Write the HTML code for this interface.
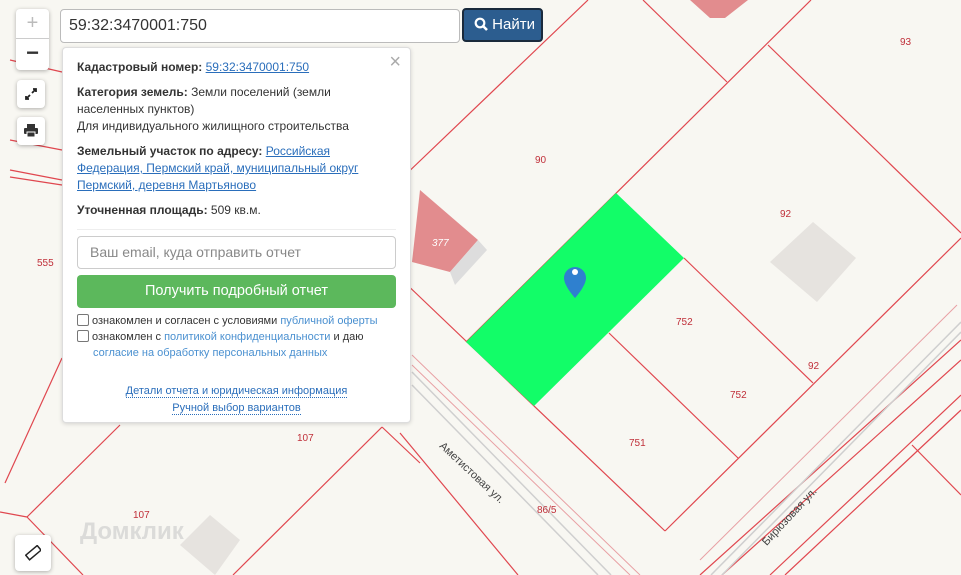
<!DOCTYPE html>
<html><head><meta charset="utf-8"><style>
*{box-sizing:border-box}
body{margin:0;width:961px;height:575px;overflow:hidden;background:#f8f7f2;font-family:"Liberation Sans",sans-serif;position:relative}
svg.map{position:absolute;left:0;top:0}
.ctl{position:absolute;background:#fff;border-radius:4px;box-shadow:0 1px 4px rgba(0,0,0,.3)}
.search{position:absolute;left:60px;top:9px;width:400px;height:34px;background:#fff;border:1px solid #bbb;border-radius:4px;font-size:16px;color:#333;padding:7px 8px}
.btn{position:absolute;left:462px;top:8px;width:81px;height:34px;background:#2c5d8f;border:2px solid #1a2a3c;border-radius:4px;color:#fff;font-size:15px;padding:6px 0 0 10px}
.panel{position:absolute;left:62px;top:47px;width:349px;height:376px;background:#fff;border:1px solid #ddd;border-radius:4px;box-shadow:0 1px 4px rgba(0,0,0,.15);font-size:12px;color:#333;padding:11px 14px 10px 14px}
.panel p{margin:0 0 8px;line-height:17px}
.panel a{color:#2a6ebb;text-decoration:underline}
.panel b{color:#333}
.inp{height:33px;border:1px solid #ccc;border-radius:4px;margin-top:6px;font-size:14px;color:#888;padding:7px 12px}
.green{height:33px;background:#5cb85c;border-radius:4px;margin-top:6px;color:#fff;font-size:14.5px;text-align:center;line-height:33px}
.cb{display:inline-block;width:12px;height:12px;border:1px solid #777;border-radius:2px;vertical-align:-2px;margin-right:3px}
.lk{color:#4a90d0}
.dot{color:#2a6ebb;border-bottom:1px dotted #2a6ebb}
.num{position:absolute;font-size:10px;color:#c0303a}
</style></head><body>
<svg class="map" width="961" height="575" viewBox="0 0 961 575">
<g fill="none" stroke="#e0474f" stroke-width="1.2">
<line x1="588" y1="0" x2="400" y2="180"/>
<line x1="811" y1="0" x2="466" y2="342"/>
<line x1="643" y1="0" x2="727" y2="82"/>
<line x1="768" y1="45" x2="961" y2="233"/>
<line x1="684" y1="258" x2="813" y2="383"/>
<line x1="961" y1="238" x2="665" y2="531"/>
<line x1="609" y1="333" x2="738" y2="458"/>
<line x1="400" y1="278" x2="665" y2="531"/>
<line x1="400" y1="433" x2="518" y2="575"/>
<line x1="382" y1="427" x2="233" y2="575"/>
<line x1="382" y1="427" x2="420" y2="463"/>
<line x1="120" y1="425" x2="27" y2="517"/>
<line x1="27" y1="517" x2="83" y2="575"/>
<line x1="62" y1="358" x2="5" y2="483"/>
<line x1="0" y1="512" x2="27" y2="517"/>
<line x1="912" y1="445" x2="961" y2="495"/>
<line x1="10" y1="60" x2="62" y2="72"/>
<line x1="10" y1="140" x2="62" y2="150"/>
<line x1="10" y1="170" x2="62" y2="180"/>
<line x1="10" y1="177" x2="62" y2="185"/>
<line x1="961" y1="340" x2="700" y2="575"/>
<line x1="961" y1="360" x2="722" y2="575"/>
<line x1="961" y1="395" x2="770" y2="575"/>
<line x1="961" y1="410" x2="785" y2="575"/>
</g>
<g fill="none" stroke="#e8a0a4" stroke-width="1">
<line x1="412" y1="355" x2="640" y2="575"/>
<line x1="412" y1="365" x2="630" y2="575"/>
<line x1="957" y1="305" x2="700" y2="560"/>
</g>
<g fill="none" stroke="#cfcfcf" stroke-width="1.5">
<line x1="412" y1="372" x2="611" y2="575"/>
<line x1="412" y1="385" x2="598" y2="575"/>
<line x1="961" y1="322" x2="711" y2="575"/>
<line x1="961" y1="332" x2="722" y2="575"/>
</g>
<polygon points="616,193 684,258 534,406 466,342" fill="#12fd68"/>
<polygon points="420,190 478,240 450,272 412,262" fill="#e28c8e"/>
<polygon points="478,240 487,250 455,285 450,272" fill="#ddd"/>
<polygon points="690,0 748,0 725,18 710,18" fill="#e28c8e"/>
<polygon points="813,222 856,258 817,302 770,262" fill="#e6e3df"/>
<polygon points="210,515 240,540 215,575 180,545" fill="#e6e3df"/>
<path d="M575,267 a11,11 0 0 1 11,11 c0,8 -11,20 -11,20 c0,0 -11,-12 -11,-20 a11,11 0 0 1 11,-11z" fill="#2f80cf"/>
<circle cx="575" cy="272" r="3" fill="#fff"/>
</svg>
<div class="num" style="left:535px;top:155px">90</div>
<div class="num" style="left:780px;top:209px">92</div>
<div class="num" style="left:900px;top:37px">93</div>
<div class="num" style="left:676px;top:317px">752</div>
<div class="num" style="left:730px;top:390px">752</div>
<div class="num" style="left:808px;top:361px">92</div>
<div class="num" style="left:629px;top:438px">751</div>
<div class="num" style="left:37px;top:258px">555</div>
<div class="num" style="left:297px;top:433px">107</div>
<div class="num" style="left:133px;top:510px">107</div>
<div class="num" style="left:537px;top:505px">86/5</div>
<div class="num" style="left:432px;top:238px;color:#fff;font-style:italic">377</div>
<div style="position:absolute;left:445px;top:440px;font-size:11px;color:#444;transform:rotate(43deg);transform-origin:0 0">Аметистовая ул.</div>
<div style="position:absolute;left:760px;top:540px;font-size:11px;color:#444;transform:rotate(-47deg);transform-origin:0 0">Бирюзовая ул.</div>
<div style="position:absolute;left:80px;top:518px;font-size:24px;color:rgba(200,200,200,.6);font-weight:bold">Домклик</div>

<div class="ctl" style="left:16px;top:9px;width:33px;height:61px">
<div style="height:30px;border-bottom:1px solid #ccc;text-align:center;font-size:20px;color:#bbb;line-height:28px">+</div>
<div style="text-align:center;font-size:22px;color:#333;line-height:28px;font-weight:bold">−</div></div>
<div class="ctl" style="left:17px;top:80px;width:28px;height:28px;text-align:center;padding-top:7px"><svg width="14" height="14"><path d="M8 6 L12 2 M9 2h3v3 M6 8 L2 12 M2 9v3h3" stroke="#222" stroke-width="1.8" fill="none"/></svg></div>
<div class="ctl" style="left:17px;top:117px;width:28px;height:28px;text-align:center;padding-top:7px"><svg width="14" height="13"><rect x="3" y="0" width="8" height="4" fill="#333"/><rect x="0" y="4" width="14" height="6" rx="1" fill="#333"/><rect x="3" y="8" width="8" height="5" fill="#333" stroke="#fff"/></svg></div>
<div class="ctl" style="left:15px;top:535px;width:36px;height:36px;text-align:center;padding-top:10px"><svg width="16" height="16"><rect x="1" y="5" width="15" height="6" transform="rotate(-40 8 8)" fill="none" stroke="#222" stroke-width="1.5"/></svg></div>

<div class="search">59:32:3470001:750</div>
<div class="btn"><svg width="14" height="14" style="vertical-align:-2px"><circle cx="6" cy="6" r="4.3" stroke="#fff" stroke-width="2.2" fill="none"/><line x1="9" y1="9" x2="13" y2="13" stroke="#fff" stroke-width="2.6"/></svg> Найти</div>

<div class="panel">
<div style="position:absolute;right:9px;top:3px;font-size:20px;color:#aaa">×</div>
<p><b>Кадастровый номер:</b> <a>59:32:3470001:750</a></p>
<p><b>Категория земель:</b> Земли поселений (земли<br>населенных пунктов)<br>Для индивидуального жилищного строительства</p>
<p><b>Земельный участок по адресу:</b> <a>Российская<br>Федерация, Пермский край, муниципальный округ<br>Пермский, деревня Мартьяново</a></p>
<p style="margin-bottom:10px"><b>Уточненная площадь:</b> 509 кв.м.</p>
<div style="border-top:1px solid #eee"></div>
<div class="inp">Ваш email, куда отправить отчет</div>
<div class="green">Получить подробный отчет</div>
<div style="margin-top:5px;line-height:16px;font-size:11px"><span class="cb"></span>ознакомлен и согласен с условиями <span class="lk">публичной оферты</span><br><span class="cb"></span>ознакомлен с <span class="lk">политикой конфиденциальности</span> и даю<br><span style="margin-left:16px" class="lk">согласие на обработку персональных данных</span></div>
<div style="text-align:center;margin-top:22px;line-height:17px;font-size:11px"><span class="dot">Детали отчета и юридическая информация</span><br><span class="dot">Ручной выбор вариантов</span></div>
</div>
</body></html>
